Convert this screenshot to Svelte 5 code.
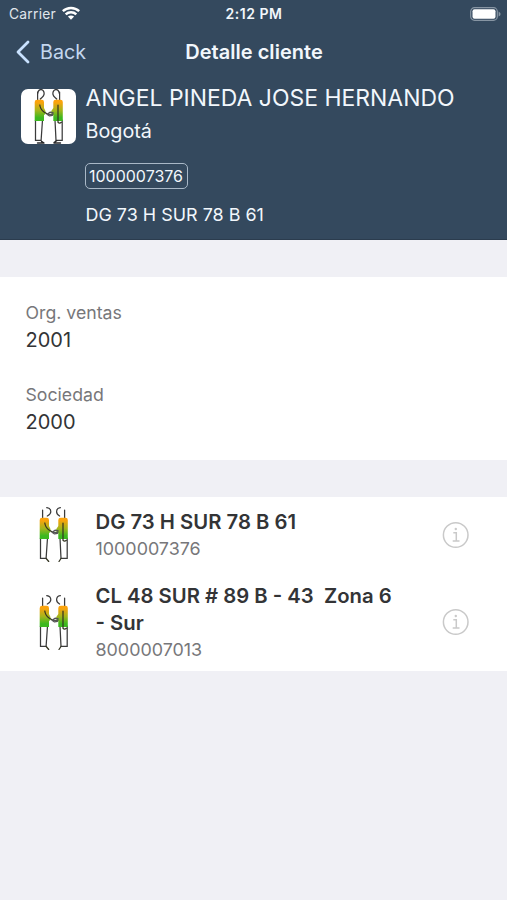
<script>
  const fields = [
    { label: 'Org. ventas', value: '2001' },
    { label: 'Sociedad', value: '2000' }
  ];
  const addresses = [
    { lines: ['DG 73 H SUR 78 B 61'], code: '1000007376' },
    { lines: ['CL 48 SUR # 89 B - 43  Zona 6', '- Sur'], code: '8000007013' }
  ];
</script>

{#snippet people(framed)}
  <svg class="people" viewBox="0 0 55 55" width="55" height="55" fill="none">
    <defs>
      <linearGradient id="shirt" x1="0" y1="0" x2="0" y2="1">
        <stop offset="0.12" stop-color="#fba30c" />
        <stop offset="0.5" stop-color="#a5b51c" />
        <stop offset="0.85" stop-color="#3cb81f" />
      </linearGradient>
    </defs>
    <g stroke="#3b3b3b" stroke-width="1.250" stroke-linecap="round">
      <path d="M14.500 31v20.300h5.600L21.500 31M34 31l1 20.300h6.200V31" />
      <path d="M16.600 3v8M38.600 3v8" />
      {#if framed}
        <path d="M16.500 5C17 2 18.500.5 20 .5c2.200 0 3.500 2.600 3 5S20.500 8.500 19.300 10M38.500 5C38 2 36.500.5 35 .5c-2.200 0-3.500 2.600-3 5s2.500 3 3.700 4.500" />
      {:else}
        <path d="M20.800.6c2.400.3 4 2 4 4.200S23.300 8 21.300 9M34.300 .6c-2.400.3-3.700 2-3.700 4.200S31.800 8 33.600 9" />
      {/if}
    </g>
    <path d="M13.700 13q0-2.300 2.500-2.300h4.500q2.300 0 2.300 2.300v6l1.500 3v3l-1.500 1v6h-9.300zM32.300 13q0-2.300 2.500-2.300h4.700q2.300 0 2.300 2.300v19h-9.500v-6l-2-1v-3l2-3z" fill="url(#shirt)" />
    <g stroke="#343522" stroke-width="1.250" stroke-linecap="round" stroke-linejoin="round">
      <path d="M18.800 16c.4 3 1.600 5.300 4.200 7l3 1.700M37 16v17.300q1.500 1.500 3.400 0" />
      <path d="M32 23.500l-3-.3-3 2 2.500 1.700 3-.5.500-2.500M27 25.300h4.500" stroke="#555" />
      {#if framed}
        <path d="M16.500 54h6.500L20.500 52.300M33 54h6.500M33 53.500l2.800-1.800" stroke="#28282a" stroke-width="1.400" />
      {:else}
        <path d="M20.200 51.500l2.500 3M35 51.500l-2 3" />
      {/if}
    </g>
  </svg>
{/snippet}

<main>
  <header>
    <div class="status">
      <span class="carrier">Carrier</span>
      <svg class="wifi" width="18" height="14" viewBox="0 0 18 14" fill="none" stroke="#fff" stroke-width="2.500">
        <path d="M.8 5.100C5.300.8 12.700.8 17.200 5.100M3.700 8.300c3-2.800 7.600-2.800 10.600 0" />
        <path d="M9 13.700 5.900 10.600c1.700-1.600 4.500-1.600 6.200 0z" fill="#fff" stroke="none" />
      </svg>
      <time>2:12 PM</time>
      <svg class="battery" width="31" height="14" viewBox="0 0 31 14">
        <rect x=".7" y=".7" width="26.600" height="12.600" rx="3.800" fill="none" stroke="#8795a3" stroke-width="1.200" />
        <rect x="2.500" y="2.200" width="23" height="9.600" rx="2" fill="#fff" />
        <path d="M28.600 4.500q2 1 2 2.500t-2 2.500z" fill="#8795a3" />
      </svg>
    </div>
    <nav>
      <span class="back">
        <svg width="15" height="24" viewBox="0 0 15 24" fill="none" stroke="#c9e2ff" stroke-width="2.800" stroke-linecap="round" stroke-linejoin="round"><path d="M13 2 3 12l10 10" /></svg>
        <span class="back-label">Back</span>
      </span>
      <h1>Detalle cliente</h1>
    </nav>
    <section class="client">
      <div class="avatar">{@render people(true)}</div>
      <div class="info">
        <div class="name">ANGEL PINEDA JOSE HERNANDO</div>
        <div class="city">Bogotá</div>
        <div class="code">1000007376</div>
        <div class="street">DG 73 H SUR 78 B 61</div>
      </div>
    </section>
  </header>

  <section class="fields">
    {#each fields as f}
      <div class="field">
        <div class="label">{f.label}</div>
        <div class="value">{f.value}</div>
      </div>
    {/each}
  </section>

  <section class="list">
    {#each addresses as a}
      <div class="row">
        {@render people(false)}
        <div class="text">
          {#each a.lines as line}<div class="title">{line}</div>{/each}
          <div class="sub">{a.code}</div>
        </div>
        <svg class="i" width="28" height="28" viewBox="0 0 28 28" fill="none" stroke="#c9c9c9" stroke-width="1.500">
          <circle cx="13.700" cy="14" r="12.300" />
          <path d="M11.300 11.800h3v8M10.700 20h6.800" />
          <circle cx="13.800" cy="8" r="1.200" fill="#c9c9c9" stroke="none" />
        </svg>
      </div>
    {/each}
  </section>
</main>

<style>
  :global(body) { background: #f0f0f5; }
  main {
    width: 507px; height: 900px; overflow: hidden;
    background: #f0f0f5; color: #333436;
    font-family: Inter, "Liberation Sans", sans-serif;
  }
  header {
    height: 240px; box-sizing: border-box; background: #34495e;
    border-bottom: 1px solid #2b3c4e; color: #f2f7fc;
  }
  .status { display: grid; grid-template-columns: 53px 112px 1fr auto; align-items: center; height: 27px; padding: 0 6px 0 9px; }
  .carrier { font-size: 13.800px; letter-spacing: .25px; color: #e0e6ec; }
  .wifi { margin-top: -2px; }
  time { font-size: 14px; letter-spacing: .5px; font-weight: 600; width: 170px; margin-left: -5px; text-align: center; }
  nav { height: 50px; display: grid; grid-template-columns: 1fr auto 1fr; align-items: center; }
  .back { display: flex; align-items: center; padding-left: 15px; gap: 10px; color: #c4d7ef; font-size: 19.700px; }
  h1 { margin: 0; font-size: 20px; font-weight: 600; letter-spacing: .03px; padding-left: 1px; }
  .client { display: flex; padding: 7px 0 0 20.500px; }
  .avatar { width: 55px; height: 55px; margin-top: 4.500px; border-radius: 7px; background: #fff; overflow: hidden; }
  .people { display: block; flex: none; }
  .info { margin-left: 10px; }
  .name { font-size: 22.950px; line-height: 28px; white-space: nowrap; }
  .city { font-size: 19.800px; line-height: 26px; margin-top: 6px; }
  .code { margin-top: 19px; margin-left: -1px; width: 103px; height: 26px; box-sizing: border-box; border: 1px solid #a9b8c7; border-radius: 5px; text-align: center; line-height: 24px; font-size: 16px; }
  .street { margin-top: 15px; font-size: 17.950px; line-height: 22px; }
  .fields { margin-top: 37px; height: 183px; box-sizing: border-box; background: #fff; padding: 23px 25px 0 25.500px; }
  .field { height: 82px; }
  .label { font-size: 17.700px; line-height: 26px; color: #77777a; }
  .value { font-size: 20px; line-height: 28px; }
  .list { margin-top: 37px; background: #fff; height: 174px; }
  .row { display: flex; height: 75px; padding: 0 37px 0 25.500px; align-items: center; }
  .row + .row { height: 100px; }
  .text { flex: 1; margin-left: 15px; }
  .title { font-size: 20.300px; line-height: 27px; font-weight: 600; white-space: pre; }
  .sub { font-size: 17.900px; line-height: 27px; color: #77777a; }
</style>
